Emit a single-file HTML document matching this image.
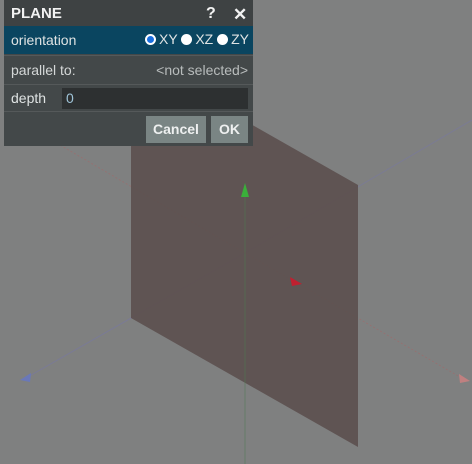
<!DOCTYPE html>
<html><head><style>
body{margin:0;width:472px;height:464px;background:#7f8080;position:relative;overflow:hidden;font-family:"Liberation Sans",sans-serif}
svg{position:absolute;left:0;top:0}
#p{position:absolute;left:4px;top:0;width:249px;height:146px;background:#434849;color:#dfe3e3;font-size:14px}
.r{position:absolute;left:0;width:249px;box-sizing:border-box}
.t{top:0;height:26px;background:#3e4243;font-weight:bold;font-size:15px;padding:5px 0 0 7px;color:#f2f2f2}
.o{top:26px;height:28px;background:#0a4560;padding:6px 0 0 7px}
.pa{top:55px;height:28px;border-top:1px solid #55595a;padding:6px 0 0 7px;color:#d5d8d8}
.d{top:84px;height:28px;border-top:1px solid #55595a;border-bottom:1px solid #55595a;padding:5px 0 0 7px}
.btn{position:absolute;top:116px;height:27px;background:#7a8584;color:#eef0f0;font-weight:bold;font-size:14px;line-height:27px;text-align:center}
.rad{display:inline-block;width:11px;height:11px;border-radius:50%;background:#fff;vertical-align:-1px;margin-right:3px;box-sizing:border-box}
</style></head><body>
<svg width="472" height="464">
<line x1="245" y1="253" x2="60" y2="145" stroke="#a06a6a" stroke-width="1" stroke-dasharray="2,2" opacity=".6"/>
<line x1="245" y1="253" x2="465" y2="380" stroke="#a06a6a" stroke-width="1" stroke-dasharray="2,2" opacity=".6"/>
<line x1="245" y1="253" x2="26" y2="378" stroke="#7878a0" stroke-width="1" opacity=".7"/>
<line x1="245" y1="253" x2="472" y2="120" stroke="#7878a0" stroke-width="1" opacity=".6"/>
<polygon points="131,56 358,185 358,447 131,318" fill="#5e5150" opacity=".94"/>
<line x1="245" y1="190" x2="245" y2="464" stroke="#4f7a4f" stroke-width="1" opacity=".5"/>
<polygon points="245,183 241,197 249,197" fill="#3ab03a"/>
<polygon points="302,284 290,277 292,286" fill="#c02030"/>
<polygon points="20,380 31,373 30,382" fill="#6a78b8"/>
<polygon points="470,381 459,374 460,383" fill="#c08080"/>
</svg>
<div id="p">
<div class="r t">PLANE<span style="position:absolute;left:202px;font-size:16px">?</span><span style="position:absolute;left:229px;font-size:17px">✕</span></div>
<div class="r o">orientation<span style="position:absolute;right:4px;top:5px;font-size:14px"><span class="rad" style="background:#1a6fe0;border:2px solid #fff"></span>XY <span class="rad"></span>XZ <span class="rad"></span>ZY</span></div>
<div class="r pa">parallel to:<span style="position:absolute;right:5px;color:#b8bcbc">&lt;not selected&gt;</span></div>
<div class="r d">depth<div style="position:absolute;left:58px;top:3px;width:186px;height:21px;background:#2d3031;color:#9fc4d8;padding:2px 0 0 4px;box-sizing:border-box">0</div></div>
<div class="btn" style="left:142px;width:60px">Cancel</div>
<div class="btn" style="left:207px;width:37px">OK</div>
</div>
</body></html>
